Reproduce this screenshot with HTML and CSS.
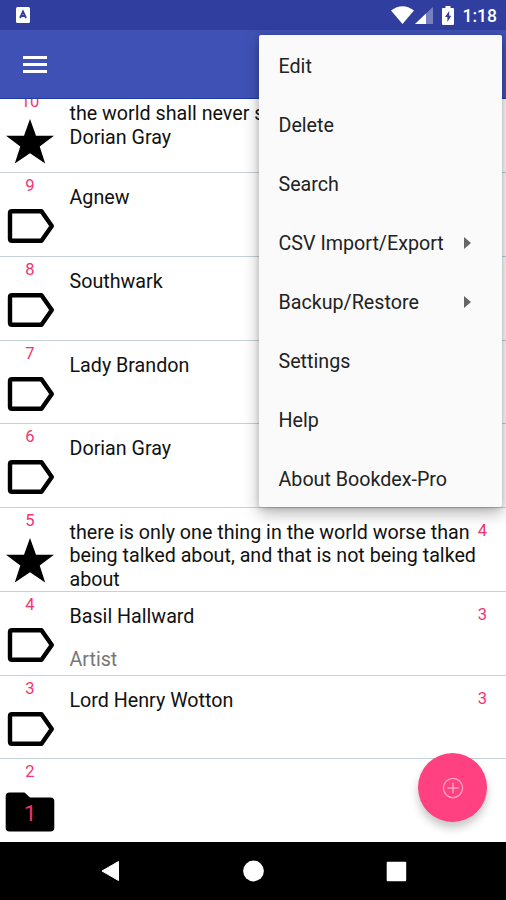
FILE: index.html
```
<!DOCTYPE html>
<html lang="en">
    <head>
        <meta charset="UTF-8" />
        <meta name="viewport" content="width=device-width, initial-scale=1.0" />
        <title>Bookdex-Pro</title>
        <link rel="stylesheet" href="styles.css">
    </head>
    <body>
        <!-- shared row icons -->
        <svg class="defs">
            <symbol id="star" viewBox="0 0 50 50">
                <path d="M25 2 L31 18.7 H49 L34.7 29.5 L40.2 46.5 L25 36.3 L9.8 46.5 L15.3 29.5 L1 18.7 H19 Z" />
            </symbol>
            <symbol id="label" viewBox="0 0 50 50">
                <path d="M7 10.2 H36.5 L46.8 25 L36.5 39.8 H7 Q5 39.8 5 37.8 V12.2 Q5 10.2 7 10.2 Z" fill="none" stroke="#000" stroke-width="4.4" stroke-linejoin="round" />
            </symbol>
            <symbol id="folder" viewBox="0 0 50 50">
                <path d="M4.5 5.5 H19.5 L25 10.5 H45.5 Q49.3 10.5 49.3 14.3 V40.7 Q49.3 44.5 45.5 44.5 H4.5 Q.7 44.5 .7 40.7 V9.3 Q.7 5.5 4.5 5.5 Z" />
            </symbol>
        </svg>

        <div class="phone">
            <div class="status_bar">
                <svg class="app_icon" viewBox="0 0 14 16">
                    <rect width="14" height="16" rx="1.5" fill="#fff" />
                    <path d="M4 11 L7 4.5 L10 11 M5.2 9 H8.8" fill="none" stroke="#303f9f" stroke-width="1.8" />
                </svg>
                <div class="status_right">
                    <svg class="wifi" viewBox="0 0 23 18">
                        <path d="M0 4.6 Q11.5 -4 23 4.6 L11.5 18 Z" fill="#fff" />
                    </svg>
                    <svg class="signal" viewBox="0 0 18 17">
                        <path d="M18 0 V17 H0 Z" fill="#7781c0" />
                        <path d="M11 6.6 V17 H0 Z" fill="#fff" />
                    </svg>
                    <svg class="battery" viewBox="0 0 12 19">
                        <path d="M3.5 0 H8.5 V2 H11 Q12 2 12 3 V18 Q12 19 11 19 H1 Q0 19 0 18 V3 Q0 2 1 2 H3.5 Z" fill="#fff" />
                        <path d="M7.2 5 L3 11 H5.4 V16 L9.3 9.8 H7.2 Z" fill="#303f9f" />
                    </svg>
                    <span class="clock">1:18</span>
                </div>
            </div>

            <div class="app_bar">
                <div class="hamburger"><i></i><i></i><i></i></div>
            </div>

            <div class="list">
                <div class="row">
                    <div class="mark"><span class="num">10</span><svg class="icon"><use href="#star" /></svg></div>
                    <div class="text"><p>the world shall never see<br>Dorian Gray</p></div>
                </div>
                <div class="row">
                    <div class="mark"><span class="num">9</span><svg class="icon"><use href="#label" /></svg></div>
                    <div class="text"><p>Agnew</p></div>
                </div>
                <div class="row">
                    <div class="mark"><span class="num">8</span><svg class="icon"><use href="#label" /></svg></div>
                    <div class="text"><p>Southwark</p></div>
                </div>
                <div class="row">
                    <div class="mark"><span class="num">7</span><svg class="icon"><use href="#label" /></svg></div>
                    <div class="text"><p>Lady Brandon</p></div>
                </div>
                <div class="row">
                    <div class="mark"><span class="num">6</span><svg class="icon"><use href="#label" /></svg></div>
                    <div class="text"><p>Dorian Gray</p></div>
                </div>
                <div class="row">
                    <div class="mark"><span class="num">5</span><svg class="icon"><use href="#star" /></svg></div>
                    <div class="text"><p>there is only one thing in the world worse than<br>being talked about, and that is not being talked<br>about</p></div>
                    <span class="count">4</span>
                </div>
                <div class="row">
                    <div class="mark"><span class="num">4</span><svg class="icon"><use href="#label" /></svg></div>
                    <div class="text"><p>Basil Hallward</p><p class="sub">Artist</p></div>
                    <span class="count">3</span>
                </div>
                <div class="row">
                    <div class="mark"><span class="num">3</span><svg class="icon"><use href="#label" /></svg></div>
                    <div class="text"><p>Lord Henry Wotton</p></div>
                    <span class="count">3</span>
                </div>
                <div class="row">
                    <div class="mark"><span class="num">2</span><svg class="icon"><use href="#folder" /></svg><span class="badge">1</span></div>
                </div>
            </div>

            <div class="nav_bar">
                <svg viewBox="0 0 24 24"><path d="M20.5 2.5 V21.5 L4 12 Z" stroke="#fff" stroke-linejoin="round" /></svg>
                <svg viewBox="0 0 24 24"><circle cx="12.5" cy="12" r="10.4" /></svg>
                <svg viewBox="0 0 24 24"><rect x="2.7" y="2.7" width="19.5" height="19.5" rx="1" /></svg>
            </div>

            <!-- overflow menu -->
            <ul class="menu">
                <li>Edit</li>
                <li>Delete</li>
                <li>Search</li>
                <li class="more">CSV Import/Export</li>
                <li class="more">Backup/Restore</li>
                <li>Settings</li>
                <li>Help</li>
                <li>About Bookdex-Pro</li>
            </ul>

            <!-- add button -->
            <button class="fab">
                <svg viewBox="0 0 22 22">
                    <circle cx="11" cy="11" r="9.6" />
                    <path d="M11 5.5 V16.5 M5.5 11 H16.5" />
                </svg>
            </button>
        </div>
    </body>
</html>
```
FILE: styles.css
```
* {
    margin: 0px;
    padding: 0px;
    box-sizing: border-box;
}

body {
    font-family: Roboto, sans-serif;
    background-color: #fff;
}

.defs {
    display: none;
}

.phone {
    width: 506px;
    height: 900px;
    position: relative;
    overflow: hidden;
    display: flex;
    flex-direction: column;
}

/* status bar */
.status_bar {
    height: 30px;
    flex: none;
    background-color: #303f9f;
    display: flex;
    justify-content: space-between;
    align-items: center;
    padding: 0px 9px 0px 16px;
}
.app_icon {
    width: 14px;
    height: 16px;
}
.status_right {
    display: flex;
    align-items: center;
}
.wifi {
    width: 23px;
    height: 18px;
}
.signal {
    width: 18px;
    height: 17px;
    margin: 1px 9px 0px 1px;
}
.battery {
    width: 12px;
    height: 19px;
    margin-right: 9px;
}
.clock {
    color: #fff;
    font-size: 17.5px;
    font-weight: 500;
    line-height: 30px;
    padding-top: 1px;
}

/* app bar */
.app_bar {
    height: 69px;
    flex: none;
    background-color: #3f51b5;
    border-bottom: 1px solid #1d3aa5;
    padding: 26px 23px;
}
.hamburger {
    width: 24px;
    display: flex;
    flex-direction: column;
    gap: 4px;
}
.hamburger i {
    height: 3px;
    background-color: #fff;
}

/* list is scrolled to the end */
.list {
    height: 743px;
    flex: none;
    overflow: hidden;
    display: flex;
    flex-direction: column;
    justify-content: flex-end;
}
.row {
    height: 83.75px;
    flex: none;
    border-top: 1px solid #c5d2d6;
    display: flex;
    position: relative;
}
.mark {
    width: 60px;
    display: flex;
    flex-direction: column;
    align-items: center;
    position: relative;
}
.num,
.count,
.badge {
    color: #f5336f;
    font-size: 16.5px;
    line-height: 20px;
}
.num {
    margin-top: 3px;
}
.icon {
    width: 50px;
    height: 50px;
    margin-top: 5px;
}
.badge {
    position: absolute;
    top: 43px;
    left: 24px;
    font-size: 22px;
    line-height: 24px;
}
.text {
    padding: 13px 0px 0px 9.5px;
    white-space: nowrap;
}
.text p {
    font-size: 19.68px;
    line-height: 23.3px;
    color: #111;
}
.text .sub {
    margin-top: 20px;
    color: #777;
}
.count {
    position: absolute;
    top: 13px;
    right: 19px;
}

/* android navigation */
.nav_bar {
    height: 58px;
    flex: none;
    background-color: #000;
    display: flex;
    justify-content: center;
    align-items: center;
    gap: 119px;
}
.nav_bar svg {
    width: 24px;
    height: 24px;
    fill: #fff;
}

/* menu */
.menu {
    position: absolute;
    top: 35px;
    left: 259px;
    width: 243px;
    height: 472px;
    padding-top: 1.5px;
    list-style: none;
    background-color: #fafafa;
    border-radius: 2px;
    box-shadow: 0px 6px 16px rgba(0, 0, 0, 0.3), 0px 1px 5px rgba(0, 0, 0, 0.15);
}
.menu li {
    height: 59.05px;
    line-height: 61px;
    padding: 0px 31px 0px 19.5px;
    font-size: 19.68px;
    color: #222;
    display: flex;
    justify-content: space-between;
    align-items: center;
}
.more::after {
    content: "";
    border-left: 7px solid #666;
    border-top: 6px solid transparent;
    border-bottom: 6px solid transparent;
}

/* add button */
.fab {
    position: absolute;
    top: 753px;
    left: 418px;
    width: 69px;
    height: 69px;
    border: none;
    border-radius: 50%;
    background-color: #ff4081;
    box-shadow: 0px 6px 9px rgba(0, 0, 0, 0.22);
    display: flex;
    justify-content: center;
    align-items: center;
}
.fab svg {
    width: 22px;
    height: 22px;
    fill: none;
    stroke: #ffa6c3;
    stroke-width: 1.3;
}
```
